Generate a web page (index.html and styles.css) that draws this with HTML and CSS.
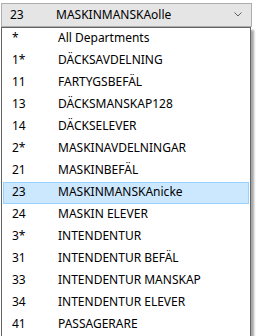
FILE: index.html
```html
<!DOCTYPE html>
<html lang="sv">
<head>
  <meta charset="UTF-8" />
  <title>Department picker</title>
  <link rel="stylesheet" href="styles.css">
</head>
<body>
  <div class="picker">
    <div class="combo">
      <span class="code">23</span>
      <span class="name">MASKINMANSKAolle</span>
      <svg class="chevron" width="8" height="5" viewBox="0 0 8 5">
        <path d="M0.5 0.5 L4 4 L7.5 0.5" fill="none" stroke="#606060" stroke-width="1"/>
      </svg>
    </div>

    <ul class="dropdown">
      <li><span class="code">*</span><span class="name">All Departments</span></li>
      <li><span class="code">1*</span><span class="name">DÄCKSAVDELNING</span></li>
      <li><span class="code">11</span><span class="name">FARTYGSBEFÄL</span></li>
      <li><span class="code">13</span><span class="name">DÄCKSMANSKAP128</span></li>
      <li><span class="code">14</span><span class="name">DÄCKSELEVER</span></li>
      <li><span class="code">2*</span><span class="name">MASKINAVDELNINGAR</span></li>
      <li><span class="code">21</span><span class="name">MASKINBEFÄL</span></li>
      <li class="selected"><span class="code">23</span><span class="name">MASKINMANSKAnicke</span></li>
      <li><span class="code">24</span><span class="name">MASKIN ELEVER</span></li>
      <li><span class="code">3*</span><span class="name">INTENDENTUR</span></li>
      <li><span class="code">31</span><span class="name">INTENDENTUR BEFÄL</span></li>
      <li><span class="code">33</span><span class="name">INTENDENTUR MANSKAP</span></li>
      <li><span class="code">34</span><span class="name">INTENDENTUR ELEVER</span></li>
      <li><span class="code">41</span><span class="name">PASSAGERARE</span></li>
    </ul>
  </div>
</body>
</html>
```

FILE: styles.css
```css
body {
  margin: 0;
  background-color: #ffffff;
  color: #000000;
  font-family: "Noto Sans", "Open Sans", sans-serif;
  font-size: 12px;
  overflow: hidden;
}
.picker {
  padding: 3px 4px 0 1px;
}
.combo {
  display: flex;
  align-items: center;
  box-sizing: border-box;
  height: 24px;
  padding-bottom: 1px;
  border: 1px solid #adadad;
  background-color: #e5e5e5;
}
.combo .code {
  width: 46px;
  padding-left: 8px;
}
.chevron {
  margin-left: auto;
  margin-right: 9px;
}
.dropdown {
  list-style: none;
  margin: 0;
  padding: 0;
  width: 248px;
  border: 1px solid #646464;
  border-bottom: none;
  box-shadow: 3px 3px 2px rgba(0, 0, 0, 0.35);
}
.dropdown li {
  display: flex;
  align-items: center;
  box-sizing: border-box;
  height: 22px;
  padding-bottom: 3px;
  border: 1px solid transparent;
  margin: 0 1px;
}
.dropdown .code {
  width: 46px;
  padding-left: 8px;
}
.dropdown li.selected {
  background-color: #cce8ff;
  border-color: #99d1ff;
}
```
